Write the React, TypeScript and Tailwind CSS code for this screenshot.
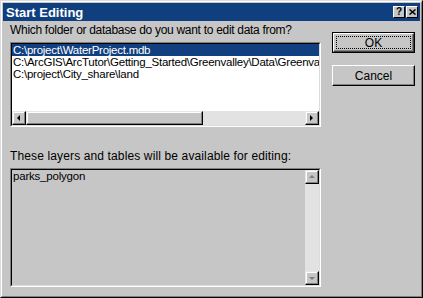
import React from "react";

const font = { fontFamily: '"Liberation Sans", Arial, sans-serif' };

function Arrow({ dir, color = "#000" }: { dir: "left" | "right" | "up" | "down"; color?: string }) {
  const pts =
    dir === "left"
      ? "5,1 5,7 2,4"
      : dir === "right"
      ? "2,1 2,7 5,4"
      : dir === "up"
      ? "1,5 7,5 4,2"
      : "1,3 7,3 4,6";
  return (
    <svg width="8" height="8" viewBox="0 0 8 8">
      <polygon points={pts} fill={color} />
    </svg>
  );
}

function SBtn({ dir, disabled }: { dir: "left" | "right" | "up" | "down"; disabled?: boolean }) {
  return (
    <div className="w-[14px] h-[14px] shrink-0 bg-[#c6c6c6] border border-t-[#e6e6e6] border-l-[#e6e6e6] border-r-[#000] border-b-[#000] shadow-[inset_-1px_-1px_0_#808080,inset_1px_1px_0_#fff] flex items-center justify-center">
      <Arrow dir={dir} color={disabled ? "#808080" : "#000"} />
    </div>
  );
}

export default function App() {
  return (
    <div className="w-[423px] h-[298px] bg-[#c6c6c6] text-[12px] text-black" style={font}>
      <div className="w-full h-full border border-t-[#dcdcdc] border-l-[#dcdcdc] border-r-[#000] border-b-[#000]">
        <div className="w-full h-full border border-t-white border-l-white border-r-[#808080] border-b-[#808080] p-[1px] flex flex-col">
          {/* title bar */}
          <div className="h-[18px] bg-[#0f3f7e] flex items-center justify-between pl-[3px] pr-[2px]">
            <span className="text-white font-bold text-[13px] leading-none">Start Editing</span>
            <div className="flex gap-[1px]">
              <div className="w-[12px] h-[12px] bg-[#c6c6c6] border border-t-white border-l-white border-r-black border-b-black flex items-center justify-center text-[10px] font-bold leading-none">?</div>
              <div className="w-[12px] h-[12px] bg-[#c6c6c6] border border-t-white border-l-white border-r-black border-b-black flex items-center justify-center">
                <svg width="7" height="6" viewBox="0 0 7 6">
                  <path d="M0.5 0.5 L6.5 5.5 M6.5 0.5 L0.5 5.5" stroke="#000" strokeWidth="1.5" />
                </svg>
              </div>
            </div>
          </div>
          {/* body */}
          <div className="flex flex-1 pl-[7px] pr-[4px]">
            <div className="w-[311px] flex flex-col">
              <div className="mt-[2px] h-[14px] leading-[14px] tracking-[-0.3px] whitespace-nowrap">Which folder or database do you want to edit data from?</div>
              {/* list */}
              <div className="mt-[5px] h-[85px] border border-t-[#808080] border-l-[#808080] border-r-white border-b-white">
                <div className="w-full h-full border border-t-black border-l-black border-r-[#dcdcdc] border-b-[#dcdcdc] bg-white flex flex-col">
                  <div className="flex-1 overflow-hidden whitespace-nowrap text-[11.5px] tracking-[-0.25px]">
                    <div className="h-[12px] leading-[12px] bg-[#123f80] text-white pl-[1px]">C:\project\WaterProject.mdb</div>
                    <div className="h-[12px] leading-[12px] pl-[1px]">C:\ArcGIS\ArcTutor\Getting_Started\Greenvalley\Data\Greenvalley</div>
                    <div className="h-[12px] leading-[12px] pl-[1px]">C:\project\City_share\land</div>
                  </div>
                  <div className="h-[14px] flex bg-[#e2e2e2]">
                    <SBtn dir="left" />
                    <div className="w-[177px] h-[14px] bg-[#c6c6c6] border border-t-[#e6e6e6] border-l-[#e6e6e6] border-r-black border-b-black shadow-[inset_-1px_-1px_0_#808080,inset_1px_1px_0_#fff]" />
                    <div className="flex-1" />
                    <SBtn dir="right" />
                  </div>
                </div>
              </div>
              <div className="mt-[22px] h-[14px] leading-[14px] tracking-[0.13px] whitespace-nowrap">These layers and tables will be available for editing:</div>
              <div className="mt-[5px] h-[119px] border border-t-[#808080] border-l-[#808080] border-r-white border-b-white">
                <div className="w-full h-full border border-t-black border-l-black border-r-[#dcdcdc] border-b-[#dcdcdc] bg-[#c6c6c6] flex">
                  <div className="flex-1 pl-[1px] leading-[13px] text-[11.5px] tracking-[-0.2px]">parks_polygon</div>
                  <div className="w-[14px] flex flex-col bg-[#e2e2e2]">
                    <SBtn dir="up" disabled />
                    <div className="flex-1" />
                    <SBtn dir="down" disabled />
                  </div>
                </div>
              </div>
            </div>
            <div className="flex flex-col ml-[11px] pt-[11px] gap-[12px]">
              <div className="w-[83px] h-[21px] border border-black">
                <div className="w-full h-full border border-t-white border-l-white border-r-[#404040] border-b-[#404040] shadow-[inset_-1px_-1px_0_#808080] p-[2px]">
                  <div className="w-full h-full border border-dotted border-black flex items-center justify-center leading-none">OK</div>
                </div>
              </div>
              <div className="w-[83px] h-[21px] border border-t-white border-l-white border-r-black border-b-black">
                <div className="w-full h-full shadow-[inset_-1px_-1px_0_#808080] flex items-center justify-center leading-none">Cancel</div>
              </div>
            </div>
          </div>
        </div>
      </div>
    </div>
  );
}
